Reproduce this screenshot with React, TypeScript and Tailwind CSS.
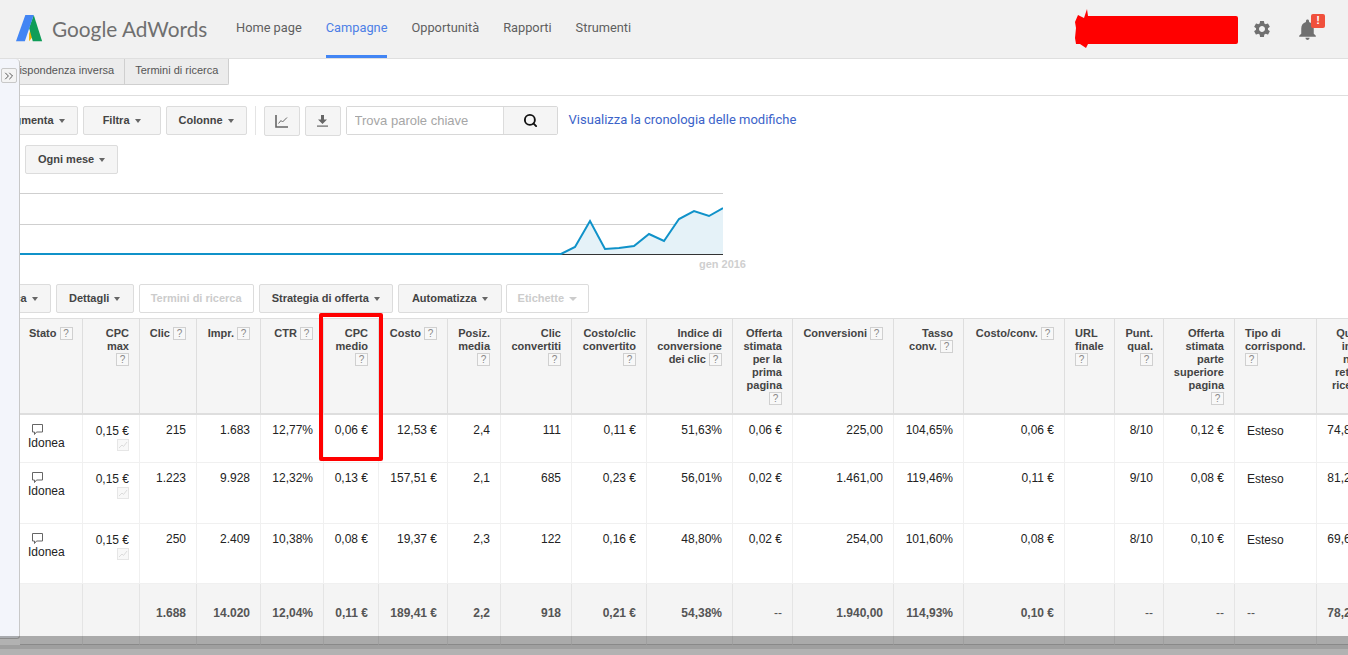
import { ChevronsRight, Search } from 'lucide-react';
import { MdNotifications, MdSettings } from 'react-icons/md';

const navItems = ['Home page', 'Campagne', 'Opportunità', 'Rapporti', 'Strumenti'];

const colWidths = [63, 57, 57, 64, 63, 55, 69, 53, 71, 75, 86, 60, 101, 70, 101, 50, 49, 71, 82, 62];

const headers = [
  { label: 'Stato ', left: true },
  { label: 'CPC\nmax\n' },
  { label: 'Clic ' },
  { label: 'Impr. ' },
  { label: 'CTR ' },
  { label: 'CPC\nmedio\n' },
  { label: 'Costo ' },
  { label: 'Posiz.\nmedia\n' },
  { label: 'Clic\nconvertiti\n' },
  { label: 'Costo/clic\nconvertito\n' },
  { label: 'Indice di\nconversione\ndei clic ' },
  { label: 'Offerta\nstimata\nper la\nprima\npagina\n' },
  { label: 'Conversioni ' },
  { label: 'Tasso\nconv. ' },
  { label: 'Costo/conv. ' },
  { label: 'URL\nfinale\n', left: true },
  { label: 'Punt.\nqual.\n' },
  { label: 'Offerta\nstimata\nparte\nsuperiore\npagina\n' },
  { label: 'Tipo di\ncorrispond.\n', left: true },
  { label: 'Quota\nimpr.\nnella\nrete di\nricerca\n' },
];

const rows = [
  { h: 'h-[48px]', cells: ['0,15 €', '215', '1.683', '12,77%', '0,06 €', '12,53 €', '2,4', '111', '0,11 €', '51,63%', '0,06 €', '225,00', '104,65%', '0,06 €', '', '8/10', '0,12 €', 'Esteso', '74,81%'] },
  { h: 'h-[61px]', cells: ['0,15 €', '1.223', '9.928', '12,32%', '0,13 €', '157,51 €', '2,1', '685', '0,23 €', '56,01%', '0,02 €', '1.461,00', '119,46%', '0,11 €', '', '9/10', '0,08 €', 'Esteso', '81,29%'] },
  { h: 'h-[60px]', cells: ['0,15 €', '250', '2.409', '10,38%', '0,08 €', '19,37 €', '2,3', '122', '0,16 €', '48,80%', '0,02 €', '254,00', '101,60%', '0,08 €', '', '8/10', '0,10 €', 'Esteso', '69,60%'] },
];

const totals = ['', '', '1.688', '14.020', '12,04%', '0,11 €', '189,41 €', '2,2', '918', '0,21 €', '54,38%', '--', '1.940,00', '114,93%', '0,10 €', '', '--', '--', '--', '78,27%'];

const chartLine = '0,64 541,64 555,57 570,31 585,59 599,58 614,56 629,44 644,51 659,29 674,21 689,26 703,18';

const Caret = () => (
  <span className="ml-[5px] inline-block h-0 w-0 border-x-[3.5px] border-t-[4px] border-x-transparent border-t-[#666]" />
);

const Btn = ({ label, className = '' }: { label: string; className?: string }) => (
  <button className={`flex h-[29px] min-w-[78px] shrink-0 items-center justify-center rounded-[2px] border border-[#dcdcdc] bg-[#f5f5f5] px-3 text-[11px] font-bold whitespace-nowrap text-[#444] ${className}`}>
    {label}
    <Caret />
  </button>
);

const Help = () => (
  <span className="inline-block h-[13px] w-[13px] border border-[#d0d0d0] bg-[#f8f8f8] text-center align-top text-[10px] leading-[11px] font-normal text-[#888]">?</span>
);

const Logo = () => (
  <svg width="28" height="28" viewBox="0 0 30 30" className="shrink-0">
    <polygon points="16,14 19,22 14,28 14,20" fill="#f4b400" />
    <polygon points="19,0 28,28 18,28 14,14" fill="#0f9d58" />
    <polygon points="10,0 19,0 9.5,28 0,28" fill="#4285f4" />
  </svg>
);

const Scribble = () => (
  <svg width="163" height="40" viewBox="0 0 163 40" className="mb-[2px] shrink-0">
    <path d="M3 7 L9 10 L12 1 L13 8 L161 8 Q163 8 163 10 L163 34 Q163 36 161 36 L13 36 L11 40 L8 38 L5 36 L1 36 L0 30 L1 20 L0 14 Z" fill="#ff0000" />
  </svg>
);

const BubbleIcon = () => (
  <svg width="13" height="13" viewBox="0 0 13 13" className="ml-[3px] block" fill="none" stroke="#666">
    <path d="M1.5 1.5h10v7.5h-6l-2 2.5v-2.5h-2z" />
  </svg>
);

const TrendIcon = () => (
  <span className="mt-[1px] ml-auto block h-[12px] w-[12px] border border-[#e6e6e6] bg-[#f8f8f8]">
    <svg width="10" height="10" viewBox="0 0 10 10" fill="none" stroke="#dcdcdc">
      <path d="M1 8 L4 5 L5.5 6.5 L9 2" />
    </svg>
  </span>
);

export default function App() {
  return (
    <div className="relative h-[655px] w-full overflow-hidden bg-white font-['Liberation_Sans',Arial,sans-serif] text-[12px] text-[#222]">
      {/* top bar */}
      <header className="flex h-[59px] items-stretch border-b border-[#dfdfdf] bg-[#f1f1f1] pl-[16px]">
        <div className="flex items-center gap-[8px]">
          <Logo />
          <span className="w-[156px] font-['Lato',sans-serif] text-[20.8px] whitespace-nowrap text-[#6f6f6f]">Google AdWords</span>
        </div>
        <nav className="ml-[28px] flex gap-6 font-['Roboto',sans-serif] text-[12.8px]">
          {navItems.map((item) => (
            <a
              key={item}
              className={`flex items-center border-b-[3px] pt-[1px] ${item === 'Campagne' ? 'border-[#4285f4] text-[#4d7fe6]' : 'border-transparent text-[#5f5f5f]'}`}
            >
              {item}
            </a>
          ))}
        </nav>
        <div className="ml-auto flex items-center pr-[28px]">
          <Scribble />
          <MdSettings size={20} className="ml-[14px] text-[#707070]" />
          <span className="relative ml-[23px] block">
            <MdNotifications size={25} className="text-[#707070]" />
            <span className="absolute top-[-3px] left-[16px] flex h-[14px] w-[14px] items-center justify-center rounded-[2px] bg-[#f0503c] text-[11px] font-bold text-white">!</span>
          </span>
        </div>
      </header>

      <div className="flex">
        {/* collapsed side panel */}
        <aside className="h-[580px] w-[20px] shrink-0 self-start rounded-tr-[4px] rounded-br-[3px] border-r border-b border-[#c8c8c8] bg-[#f3f5fb] pt-[9px] pl-[1px]">
          <button className="flex h-[15px] w-[16px] items-center justify-center rounded-[2px] border border-[#c8c8c8] bg-[#f4f4f4]">
            <ChevronsRight size={14} strokeWidth={1.4} className="text-[#333]" />
          </button>
        </aside>

        <main className="relative min-w-0 flex-1 overflow-hidden">
          {/* tabs */}
          <div className="flex h-[37px] border-b border-[#dedede]">
            <div className="ml-[-32px] flex h-[26px] text-[11px] text-[#555]">
              <span className="flex items-center border-r border-b border-[#cfcfcf] bg-[#ececec] px-[10px] pb-[3px] whitespace-nowrap">Corrispondenza inversa</span>
              <span className="flex items-center rounded-br-[2px] border-r border-b border-[#cfcfcf] bg-[#ececec] px-[10px] pb-[3px] whitespace-nowrap">Termini di ricerca</span>
            </div>
          </div>

          {/* toolbar */}
          <div className="mt-[10px] flex items-start gap-[5px]">
            <Btn label="Segmenta" className="ml-[-32px]" />
            <Btn label="Filtra" />
            <Btn label="Colonne" />
            <span className="mx-[3px] h-[29px] border-l border-[#e4e4e4]" />
            <button className="flex h-[30px] w-[36px] items-center justify-center rounded-[2px] border border-[#dcdcdc] bg-[#f5f5f5]">
              <svg width="14" height="13" viewBox="0 0 14 13" fill="none" stroke="#666">
                <path d="M1 0v12h12" strokeWidth="1.6" />
                <path d="M3.5 8.5 L6 5.5 L7.5 7 L12 2.5" />
              </svg>
            </button>
            <button className="flex h-[30px] w-[36px] items-center justify-center rounded-[2px] border border-[#dcdcdc] bg-[#f5f5f5]">
              <svg width="11" height="12" viewBox="0 0 11 12" fill="#666">
                <path d="M4 0h3v4.5h3L5.5 9 1 4.5h3z" />
                <path d="M0 10.5h11v1.2H0z" />
              </svg>
            </button>
            <div className="flex h-[29px] w-[212px] rounded-[2px] border border-[#d8d8d8]">
              <input
                readOnly
                placeholder="Trova parole chiave"
                className="w-[156px] bg-white px-2 pt-[1px] text-[13px] outline-none placeholder:text-[#a6a6a6]"
              />
              <span className="flex flex-1 items-center justify-center border-l border-[#dcdcdc] bg-[#f5f5f5]">
                <Search size={15} strokeWidth={3} className="text-[#111]" />
              </span>
            </div>
            <a className="ml-[6px] font-['Roboto',sans-serif] text-[13px] leading-[28px] whitespace-nowrap text-[#3b63c9]">Visualizza la cronologia delle modifiche</a>
          </div>

          <div className="mt-[9px] ml-[5px]">
            <Btn label="Ogni mese" />
          </div>

          {/* chart */}
          <div className="mt-[16px] w-[726px]">
            <svg width="703" height="68" viewBox="0 0 703 68" className="block">
              <line x1="0" y1="3.5" x2="703" y2="3.5" stroke="#cfcfcf" />
              <line x1="0" y1="34.5" x2="703" y2="34.5" stroke="#cfcfcf" />
              <polygon points={`${chartLine} 703,64`} fill="#e5f2f8" />
              <line x1="0" y1="64.5" x2="703" y2="64.5" stroke="#333" />
              <polyline points={chartLine} fill="none" stroke="#1092c9" strokeWidth="2" />
            </svg>
            <div className="text-right text-[11px] leading-[12px] font-bold text-[#cfcfcf]">gen 2016</div>
          </div>

          {/* action bar */}
          <div className="mt-[14px] flex gap-[5px]">
            <Btn label="Modifica" className="ml-[-51px]" />
            <Btn label="Dettagli" />
            <button className="h-[29px] w-[115px] shrink-0 rounded-[2px] border border-[#dcdcdc] bg-white text-[11px] font-bold text-[#ccc]">Termini di ricerca</button>
            <Btn label="Strategia di offerta" />
            <Btn label="Automatizza" className="min-w-[104px]" />
            <button className="-ml-px flex h-[29px] w-[83px] shrink-0 items-center justify-center rounded-[2px] border border-[#dcdcdc] bg-white text-[11px] font-bold text-[#ccc]">
              Etichette
              <span className="ml-[5px] inline-block h-0 w-0 border-x-[4px] border-t-[4px] border-x-transparent border-t-[#ccc]" />
            </button>
          </div>

          {/* keywords table */}
          <div className="relative mt-[5px]">
            <table className="table-fixed border-separate border-spacing-0" style={{ width: colWidths.reduce((a, b) => a + b, 0) }}>
              <colgroup>
                {colWidths.map((w, i) => (
                  <col key={i} style={{ width: w }} />
                ))}
              </colgroup>
              <thead>
                <tr>
                  {headers.map((h) => (
                    <th
                      key={h.label}
                      className={`h-[97px] border-t border-r border-b-2 border-[#dedede] bg-[#f5f5f5] pt-[8px] align-top text-[11px] leading-[13px] font-bold whitespace-pre-line text-[#444] ${h.left ? 'pr-1 pl-[10px] text-left first:pl-[9px]' : 'pr-[10px] pl-1 text-right'}`}
                    >
                      {h.label}
                      <Help />
                    </th>
                  ))}
                </tr>
              </thead>
              <tbody>
                {rows.map((row, r) => (
                  <tr key={r}>
                    <td className={`${row.h} border-r border-b border-[#f0f0f0] pt-[8px] pl-[8px] align-top leading-[14px]`}>
                      <BubbleIcon />
                      Idonea
                    </td>
                    {row.cells.map((cell, i) => (
                      <td
                        key={i}
                        className={`border-r border-b border-[#f0f0f0] align-top leading-[14px] ${cell === 'Esteso' ? 'pt-[9px] pl-[12px] text-left' : i === 0 ? 'pt-[9px] pr-[10px] text-right' : 'pt-[8px] pr-[10px] text-right'}`}
                      >
                        {cell}
                        {i === 0 && <TrendIcon />}
                      </td>
                    ))}
                  </tr>
                ))}
                <tr>
                  {totals.map((cell, i) => (
                    <td
                      key={i}
                      className={`h-[61px] border-r border-b border-[#e4e4e4] border-b-[#c4c4c4] bg-[#f4f4f4] pt-[22px] align-top leading-[14px] text-[#555] ${cell === '--' ? 'font-normal' : 'font-bold'} ${i === 18 ? 'pl-[12px] text-left' : 'pr-[10px] text-right'}`}
                    >
                      {cell}
                    </td>
                  ))}
                </tr>
              </tbody>
            </table>
            {/* highlight drawn over the CPC medio column */}
            <div className="absolute top-[-5px] left-[299px] h-[148px] w-[64px] rounded-[2px] border-[4px] border-[#ff0000]" />
          </div>
        </main>
      </div>

      {/* dimmed strip along the window bottom */}
      <div className="absolute inset-x-0 bottom-0 h-[19px] bg-black/30 pt-[9px]">
        <div className="h-[4px] bg-black/10" />
      </div>
    </div>
  );
}
